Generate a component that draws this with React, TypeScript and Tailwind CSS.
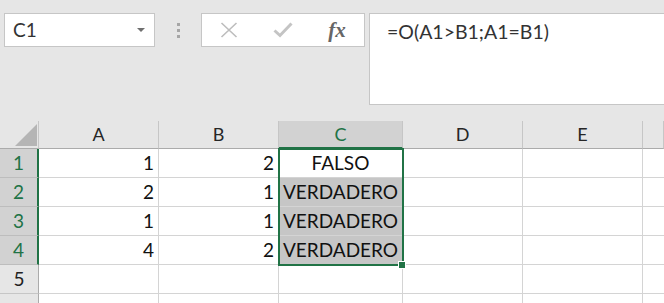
import React from "react";

const font = { fontFamily: "Lato, 'Noto Sans', sans-serif" };

const cols = ["A", "B", "C", "D", "E", ""];
const data: [string, string, string][] = [
  ["1", "2", "FALSO"],
  ["2", "1", "VERDADERO"],
  ["1", "1", "VERDADERO"],
  ["4", "2", "VERDADERO"],
  ["", "", ""],
  ["", "", ""],
];

export default function App() {
  return (
    <div className="w-[664px] h-[303px] overflow-hidden bg-[#e6e6e6] text-[#222]" style={font}>
      {/* formula bar area */}
      <div className="h-[121px] flex items-start pt-[13px] pl-[4px]">
        <div className="w-[151px] h-[34px] bg-white border border-[#c6c6c6] flex items-center justify-between pl-[8px] pr-[9px]">
          <span className="text-[19px] text-[#333]">C1</span>
          <svg width="8" height="5" viewBox="0 0 8 5">
            <path d="M0 0 L8 0 L4 4 Z" fill="#6f6f6f" />
          </svg>
        </div>
        <div className="w-[46px] h-[34px] flex flex-col items-center justify-center gap-[3px]">
          <div className="w-[3px] h-[3px] bg-[#a6a6a6]" />
          <div className="w-[3px] h-[3px] bg-[#a6a6a6]" />
          <div className="w-[3px] h-[3px] bg-[#a6a6a6]" />
        </div>
        <div className="w-[164px] h-[34px] bg-white border border-[#c6c6c6] flex items-center">
          <div className="w-[54px] flex justify-center">
            <svg width="18" height="16" viewBox="0 0 18 16">
              <path d="M1.5 1 L16.5 15 M16.5 1 L1.5 15" stroke="#bdbdbd" strokeWidth="1.6" fill="none" />
            </svg>
          </div>
          <div className="w-[54px] flex justify-center">
            <svg width="20" height="16" viewBox="0 0 20 16">
              <path d="M1.5 8.5 L7 13.5 L18.5 1.5" stroke="#c4c4c4" strokeWidth="3" fill="none" />
            </svg>
          </div>
          <div className="w-[54px] flex justify-center">
            <span
              className="italic font-bold text-[21px] text-[#666] leading-none"
              style={{ fontFamily: "'Liberation Serif', 'DejaVu Serif', serif" }}
            >
              fx
            </span>
          </div>
        </div>
        <div className="ml-[4px] flex-1 h-[92px] bg-white border border-[#c6c6c6] border-r-0 pl-[17px] pt-[3px]">
          <span className="text-[19.5px] text-[#333]">=O(A1&gt;B1;A1=B1)</span>
        </div>
      </div>

      {/* grid */}
      <div className="relative grid grid-cols-[39px_120px_120px_124px_120px_120px_1fr] grid-rows-[28px_29px_29px_29px_29px_29px_29px] bg-white">
        {/* header row */}
        <div className="bg-[#e6e6e6] border-r border-[#c6c6c6] border-b border-b-[#ababab] relative">
          <svg className="absolute left-[15px] top-[3px]" width="22" height="22" viewBox="0 0 22 22">
            <path d="M22 0 L22 22 L0 22 Z" fill="#b5b5b5" />
          </svg>
        </div>
        {cols.map((c, i) => (
          <div
            key={i}
            className={
              c === "C"
                ? "bg-[#d2d2d2] border-r border-[#c6c6c6] border-b-2 border-b-[#217346] flex items-center justify-center text-[18px] text-[#217346]"
                : "bg-[#e6e6e6] border-r border-[#c6c6c6] border-b border-b-[#ababab] flex items-center justify-center text-[18px] text-[#262626]"
            }
          >
            {c}
          </div>
        ))}

        {data.map((row, r) => {
          const sel = r < 4;
          return (
            <React.Fragment key={r}>
              <div
                className={
                  sel
                    ? "bg-[#d2d2d2] border-b border-[#bdbdbd] border-r-2 border-r-[#217346] flex items-center justify-center text-[19px] text-[#217346]"
                    : "bg-[#e6e6e6] border-b border-[#c6c6c6] border-r border-r-[#ababab] flex items-center justify-center text-[19px] text-[#222]"
                }
              >
                {r < 5 ? r + 1 : ""}
              </div>
              <div className="border-r border-b border-[#d4d4d4] flex items-center justify-end pr-[4px] text-[19px] text-[#111]">
                {row[0]}
              </div>
              <div className="border-r border-b border-[#d4d4d4] flex items-center justify-end pr-[4px] text-[19px] text-[#111]">
                {row[1]}
              </div>
              <div
                className={
                  r >= 1 && r <= 3
                    ? "border-r border-b border-[#d4d4d4] bg-[#c6c6c6] flex items-center justify-center text-[19px] text-[#111]"
                    : "border-r border-b border-[#d4d4d4] flex items-center justify-center text-[19px] text-[#111]"
                }
              >
                {row[2]}
              </div>
              <div className="border-r border-b border-[#d4d4d4]" />
              <div className="border-r border-b border-[#d4d4d4]" />
              <div className="border-b border-[#d4d4d4]" />
            </React.Fragment>
          );
        })}

        {/* selection overlay */}
        <div className="absolute left-[278px] top-[27px] w-[126px] h-[118px] border-2 border-[#217346] pointer-events-none" />
        <div className="absolute left-[398px] top-[140px] w-[8px] h-[8px] bg-[#217346] border border-white pointer-events-none" />
      </div>
    </div>
  );
}
